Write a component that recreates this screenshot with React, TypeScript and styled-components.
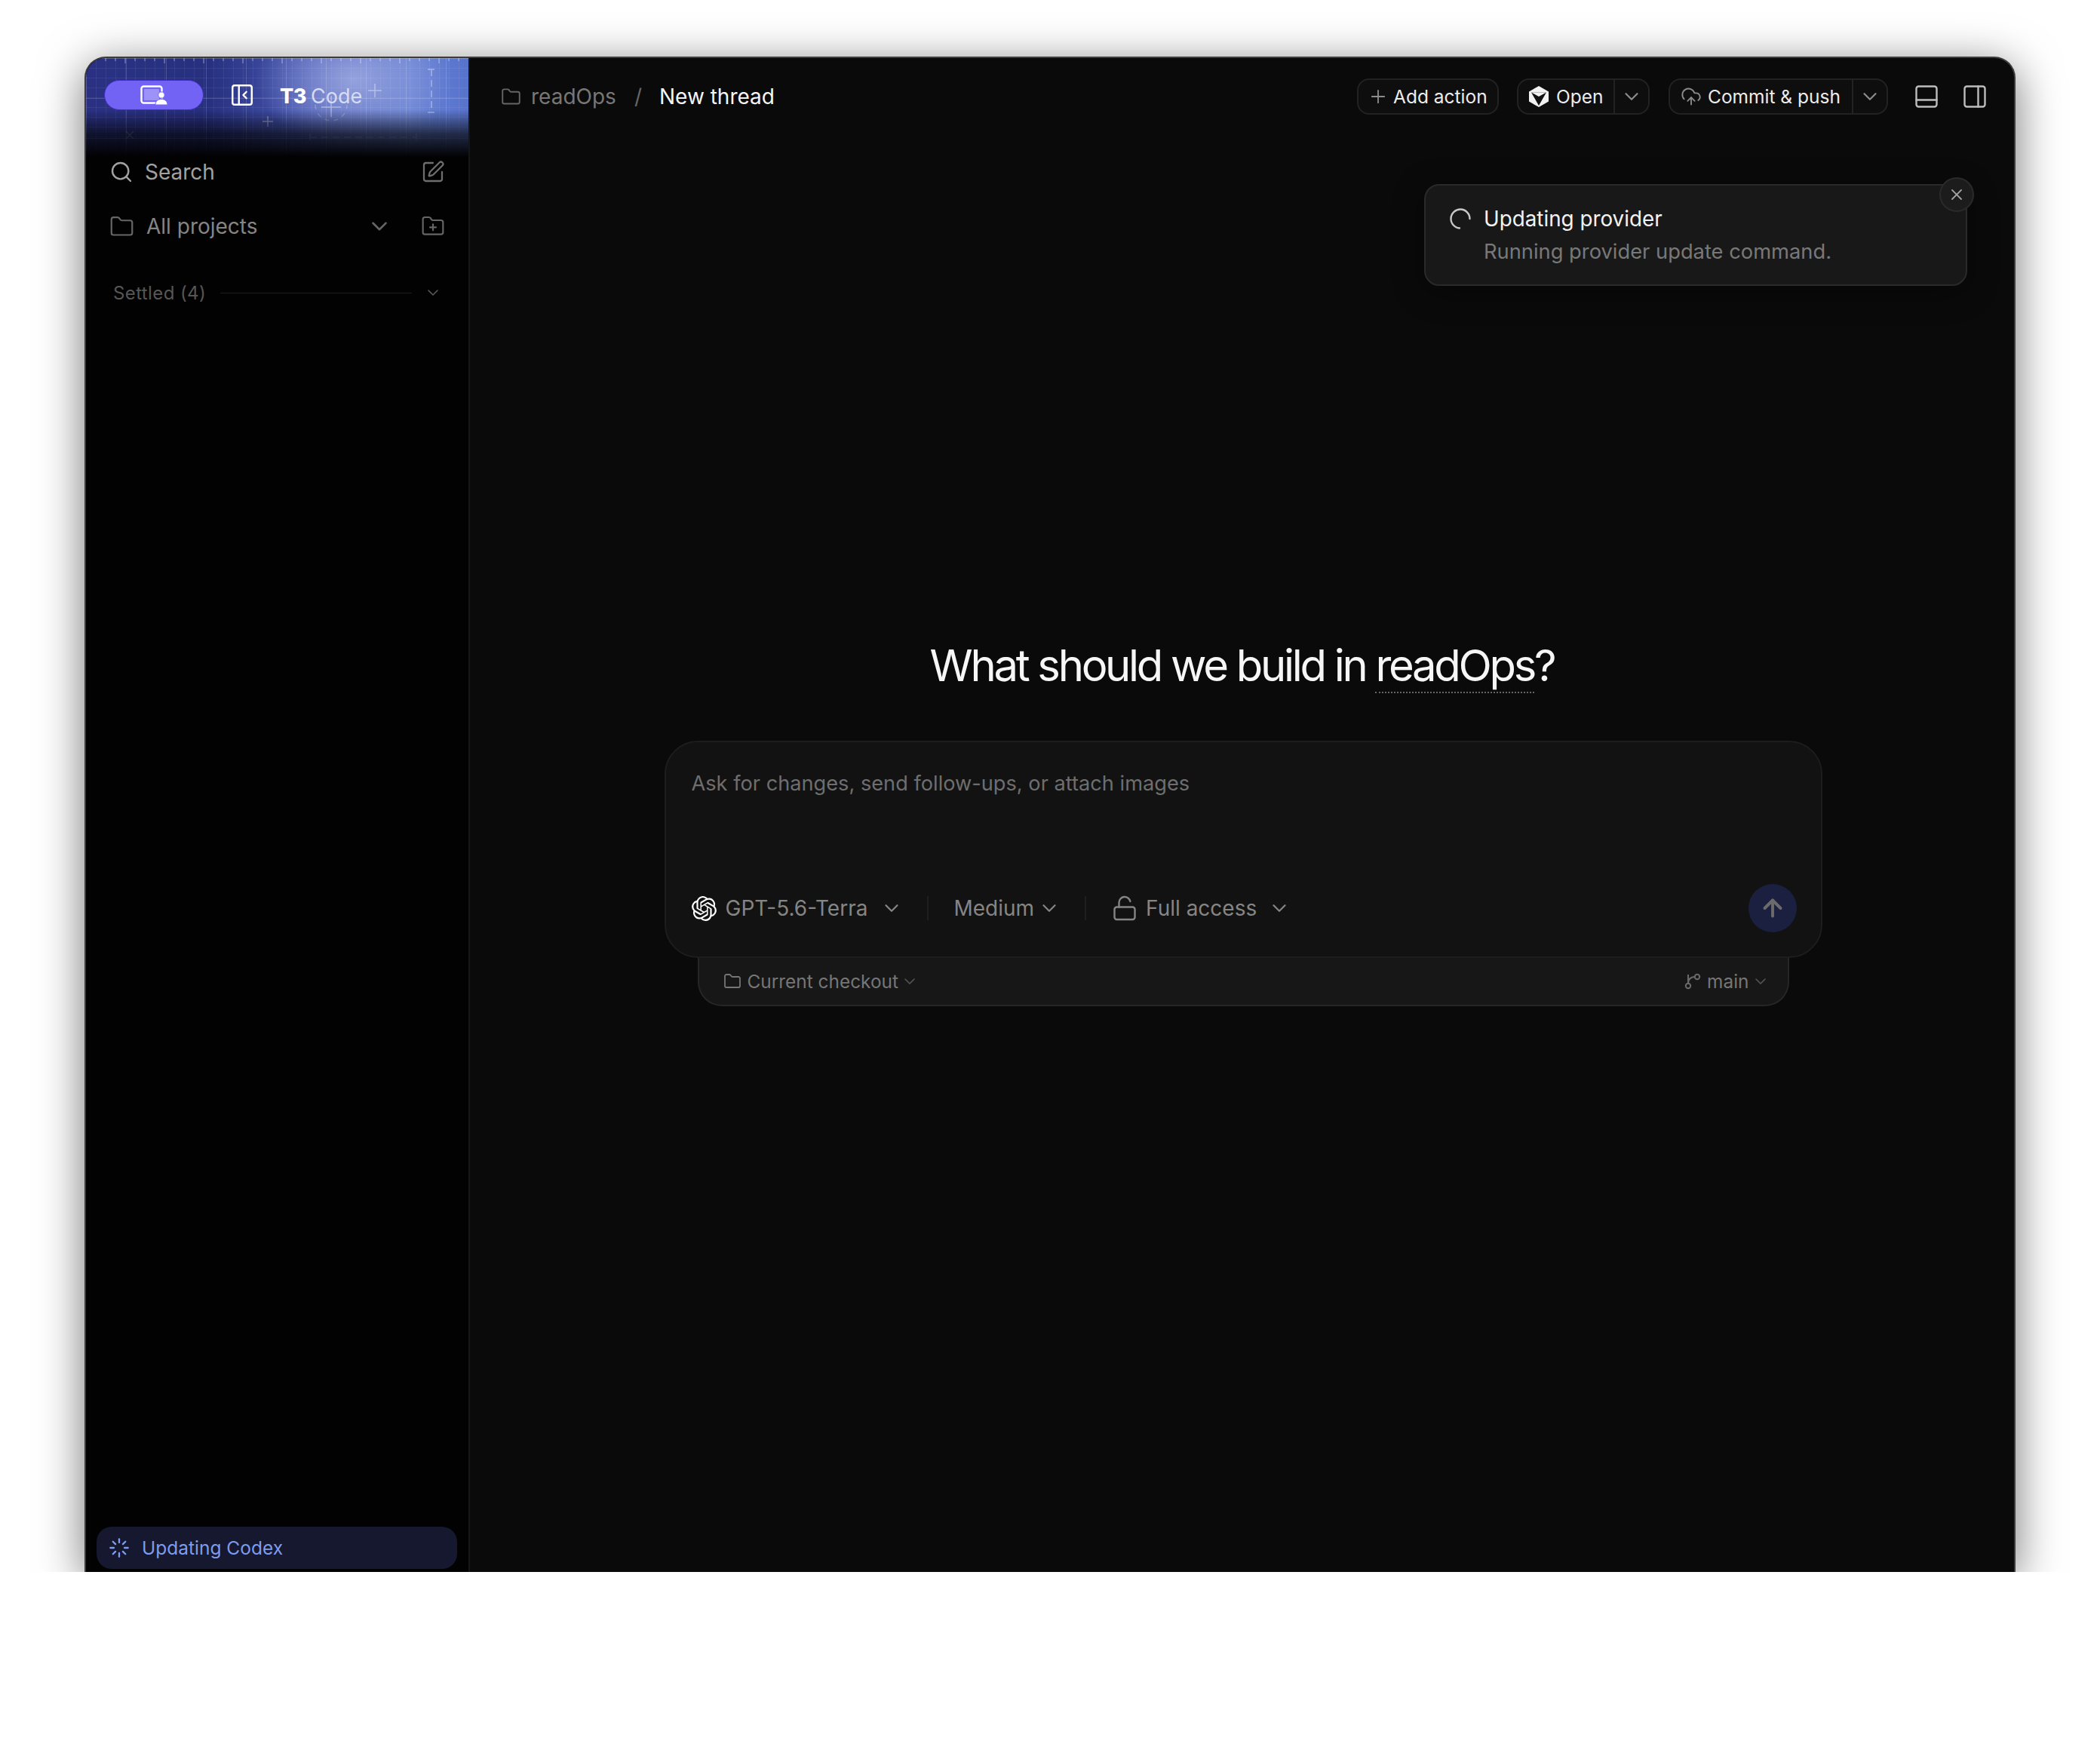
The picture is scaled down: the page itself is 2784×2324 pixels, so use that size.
import React from 'react';
import styled, { createGlobalStyle } from 'styled-components';
import {
  ArrowUp,
  ChevronDown,
  CloudUpload,
  Folder,
  FolderPlus,
  Loader,
  LockOpen,
  PanelBottom,
  PanelLeftClose,
  PanelRight,
  Plus,
  Search,
  SquarePen,
  X,
} from 'lucide-react';
import { SiOpenai } from 'react-icons/si';

const GlobalStyle = createGlobalStyle`
  html, body {
    margin: 0;
    background: #fff;
    font-family: Inter, "Liberation Sans", sans-serif;
  }
  * { box-sizing: border-box; }
`;

const Page = styled.div`
  width: 2784px;
  height: 2324px;
  background: #fff;
`;

const Stage = styled.div`
  height: 2084px;
  padding: 75px 112px 0;
  overflow: hidden;
`;

const AppWindow = styled.div`
  display: flex;
  height: 2009px;
  background: #0a0a0a;
  border: 2px solid #3c3c3c;
  border-bottom: 0;
  border-radius: 28px 28px 0 0;
  box-shadow: 0 12px 60px rgba(0, 0, 0, 0.55);
  overflow: hidden;
`;

const Sidebar = styled.aside`
  position: relative;
  display: flex;
  flex-direction: column;
  flex: 0 0 509px;
  background: #020202;
  border-right: 2px solid #161616;
`;

const HeaderArt = styled.div`
  position: absolute;
  top: 0;
  left: 0;
  right: 0;
  height: 132px;
  background:
    radial-gradient(ellipse 130px 90px at 355px 28px, rgba(160, 172, 226, 0.85), rgba(160, 172, 226, 0) 100%),
    linear-gradient(90deg, #2a3183 0%, #27307f 32%, #4a5bb6 60%, #6580d4 85%, #5873cc 100%);
  mask-image: linear-gradient(180deg, #000 0%, #000 52%, rgba(0, 0, 0, 0.35) 76%, transparent 100%);
`;

const HeaderGrid = styled.div`
  position: absolute;
  inset: 0;
  background-image:
    linear-gradient(90deg, rgba(255, 255, 255, 0.16) 1px, transparent 1px),
    linear-gradient(180deg, rgba(255, 255, 255, 0.16) 1px, transparent 1px),
    linear-gradient(90deg, rgba(255, 255, 255, 0.06) 1px, transparent 1px),
    linear-gradient(180deg, rgba(255, 255, 255, 0.06) 1px, transparent 1px);
  background-size: 53px 53px, 53px 53px, 13px 13px, 13px 13px;
`;

const ArtDrawing = styled.svg`
  position: absolute;
  top: 0;
  left: 0;
`;

const SidebarHeader = styled.div`
  position: relative;
  display: flex;
  align-items: flex-start;
  height: 127px;
  padding: 29px 0 0 24px;
`;

const ModePill = styled.div`
  display: flex;
  align-items: center;
  justify-content: center;
  width: 132px;
  height: 40px;
  background: #7263f5;
  border: 1px solid #3f30c4;
  border-radius: 20px;
`;

const CollapseButton = styled.div`
  display: flex;
  margin: 3px 0 0 34px;
  color: #fff;
`;

const Brand = styled.div`
  margin: 2px 0 0 33px;
  font-size: 27px;
  line-height: 40px;
  color: #d5dcf5;
  white-space: nowrap;
`;

const BrandMark = styled.span`
  margin-right: 6px;
  font-weight: 800;
  letter-spacing: -0.5px;
  color: #fff;
`;

const NavRow = styled.div<{ $top: number; $color: string }>`
  display: flex;
  align-items: center;
  height: 48px;
  margin-top: ${(p) => p.$top}px;
  padding: 0 31px 0 31px;
  font-size: 28px;
  color: ${(p) => p.$color};
`;

const NavLabel = styled.span<{ $gap: number }>`
  flex: 1;
  margin-left: ${(p) => p.$gap}px;
`;

const ProjectChevron = styled(ChevronDown)`
  margin-right: 38px;
`;

const SectionRow = styled.div`
  display: flex;
  align-items: center;
  height: 48px;
  margin-top: 40px;
  padding: 0 35px 0 36px;
  font-size: 24px;
  letter-spacing: 0.4px;
  color: #565656;
`;

const SectionRule = styled.div`
  flex: 1;
  height: 1px;
  margin: 0 16px 0 19px;
  background: #1c1c1c;
`;

const UpdateBadge = styled.div`
  display: flex;
  align-items: center;
  gap: 16px;
  height: 56px;
  margin: auto 15px 4px 14px;
  padding: 0 16px 0 16px;
  background: #15182e;
  border-radius: 20px;
  font-size: 24.5px;
  color: #7d9cf0;
`;

const Main = styled.main`
  position: relative;
  display: flex;
  flex-direction: column;
  align-items: center;
  flex: 1;
  min-width: 0;
`;

const TopBar = styled.header`
  display: flex;
  align-items: center;
  justify-content: space-between;
  align-self: stretch;
  height: 102px;
  padding: 0 34px 0 41px;
`;

const Breadcrumb = styled.div`
  display: flex;
  align-items: center;
  font-size: 28px;
  color: #777;
`;

const CrumbLabel = styled.span`
  margin-left: 13px;
`;

const CrumbSlash = styled.span`
  margin: 0 23px 0 24px;
  color: #666;
`;

const CrumbCurrent = styled.span`
  color: #f5f5f5;
`;

const Actions = styled.div`
  display: flex;
  align-items: center;
`;

const ActionGroup = styled.div<{ $width: number; $gap: number }>`
  display: flex;
  align-items: center;
  width: ${(p) => p.$width}px;
  height: 48px;
  margin-right: ${(p) => p.$gap}px;
  background: #0e0e0e;
  border: 2px solid #222;
  border-radius: 16px;
  font-size: 24.5px;
  color: #ececec;
`;

const ActionMain = styled.div<{ $gap: number; $left: number }>`
  display: flex;
  flex: 1;
  align-items: center;
  gap: ${(p) => p.$gap}px;
  height: 100%;
  padding-left: ${(p) => p.$left}px;
  white-space: nowrap;
`;

const ActionCaret = styled.div`
  display: flex;
  align-items: center;
  justify-content: center;
  flex: 0 0 46px;
  height: 100%;
  border-left: 2px solid #222;
  color: #8a8a8a;
`;

const PlusIcon = styled(Plus)`
  color: #8c8c8c;
`;

const CloudIcon = styled(CloudUpload)`
  color: #8c8c8c;
`;

const LayoutToggles = styled.div`
  display: flex;
  gap: 28px;
  color: #bdbdbd;
`;

const Toast = styled.div`
  position: absolute;
  top: 167px;
  right: 62px;
  display: flex;
  gap: 17px;
  width: 720px;
  height: 135px;
  padding: 24px 32px;
  background: #181818;
  border: 2px solid #2a2a2a;
  border-radius: 20px;
  box-shadow: 0 8px 40px rgba(0, 0, 0, 0.4);
`;

const ToastSpinner = styled.svg`
  flex: none;
  margin-top: 6px;
`;

const ToastTitle = styled.div`
  font-size: 27.8px;
  line-height: 40px;
  color: #f2f2f2;
`;

const ToastBody = styled.div`
  margin-top: 4px;
  font-size: 27.3px;
  line-height: 40px;
  color: #787878;
`;

const ToastClose = styled.div`
  position: absolute;
  top: -11px;
  right: -11px;
  display: flex;
  align-items: center;
  justify-content: center;
  width: 46px;
  height: 46px;
  background: #1c1c1c;
  border: 2px solid #2a2a2a;
  border-radius: 50%;
  color: #a2a2a2;
`;

const Heading = styled.h1`
  margin: 667px 0 0;
  font-size: 58px;
  font-weight: 400;
  line-height: 72px;
  letter-spacing: -3.3px;
  color: #f6f6f6;
`;

const RepoName = styled.span`
  border-bottom: 2px dotted #666;
`;

const Composer = styled.div`
  display: flex;
  flex-direction: column;
  justify-content: space-between;
  width: 1535px;
  height: 288px;
  margin: 64px 0 0 3px;
  padding: 35px 32px 32px 34px;
  background: #121212;
  border: 2px solid #1d1d1d;
  border-radius: 44px;
  position: relative;
  z-index: 1;
`;

const Placeholder = styled.div`
  font-size: 27.2px;
  line-height: 40px;
  color: #6e6e6e;
`;

const ComposerBar = styled.div`
  display: flex;
  align-items: center;
  height: 64px;
  font-size: 28px;
  color: #858585;
`;

const Picker = styled.div<{ $gap: number }>`
  display: flex;
  align-items: center;
  gap: ${(p) => p.$gap}px;
`;

const PickerChevron = styled(ChevronDown)`
  margin-left: 5px;
`;

const PickerDivider = styled.div`
  width: 2px;
  height: 32px;
  margin: 0 33px 0 32px;
  background: #1f1f1f;
`;

const Spacer = styled.div`
  flex: 1;
`;

const SendButton = styled.div`
  display: flex;
  align-items: center;
  justify-content: center;
  width: 64px;
  height: 64px;
  background: #1c2040;
  border-radius: 50%;
  color: #6b6b6b;
`;

const ComposerFooter = styled.div`
  display: flex;
  align-items: center;
  justify-content: space-between;
  width: 1447px;
  height: 65px;
  margin: -1px 0 0 3px;
  padding: 0 24px 0 32px;
  background: #171717;
  border: 2px solid #262626;
  border-top: 0;
  border-radius: 0 0 32px 32px;
  font-size: 24.4px;
  color: #767676;
`;

const FooterItem = styled.div`
  display: flex;
  align-items: center;
  gap: 8px;
`;

const FooterChevron = styled(ChevronDown)`
  margin-left: -5px;
  color: #565656;
`;

function HeaderDrawing() {
  const ticks = Array.from({ length: 39 }, (_, i) => `M${i * 13} 0v${i % 4 === 0 ? 7 : 4}`).join('');
  return (
    <ArtDrawing width="507" height="132" fill="none" stroke="rgba(255,255,255,0.4)" strokeWidth="1.5">
      <path d={ticks} opacity="0.8" />
      <path d="M383 34v18M374 43h18" />
      <path d="M241 77v14M234 84h14" />
      <path d="M53 97l10 10M63 97l-10 10" opacity="0.6" />
      <path d="M304 62a21 21 0 0 0 42 0" strokeDasharray="6 6" opacity="0.6" />
      <path d="M325 50v28M312 65h26" />
      <path d="M297 100v10M297 105h141M438 100v10" strokeDasharray="9 6" opacity="0.6" />
      <path d="M453 15h10M458 15v57M453 72h10" strokeDasharray="9 5" />
    </ArtDrawing>
  );
}

function ModeIcon() {
  return (
    <svg width="36" height="26" viewBox="0 0 36 26" fill="none">
      <rect x="1.5" y="1.5" width="27" height="22" rx="3" stroke="#fff" strokeWidth="2.4" />
      <rect x="5" y="5" width="20" height="15" fill="#fff" opacity="0.3" />
      <circle cx="28" cy="13" r="4.2" fill="#fff" stroke="#7263f5" strokeWidth="1" />
      <path d="M20 26c0-5 3.500-7.600 8-7.600s8 2.600 8 7.600z" fill="#fff" stroke="#7263f5" strokeWidth="1" />
    </svg>
  );
}

function CursorIcon() {
  return (
    <svg width="26" height="28" viewBox="0 0 26 28">
      <path d="M13 0l13 7.500v13L13 28 0 20.500v-13z" fill="#f2f2f2" />
      <path d="M3 8.500h20L13 26z" fill="#111" />
      <path d="M13 26V14L3 8.500h20L13 14z" fill="#f2f2f2" />
    </svg>
  );
}

function BranchIcon() {
  return (
    <svg width="22" height="22" viewBox="0 0 22 22" fill="none" stroke="#6a6a6a" strokeWidth="2">
      <circle cx="5" cy="17" r="3.200" />
      <circle cx="17" cy="5" r="3.200" />
      <path d="M5 14V2M5 13c0-5 4-8 9-8" />
    </svg>
  );
}

export default function App() {
  return (
    <Page>
      <GlobalStyle />
      <Stage>
        <AppWindow>
          <Sidebar>
            <HeaderArt>
              <HeaderGrid />
              <HeaderDrawing />
            </HeaderArt>
            <SidebarHeader>
              <ModePill>
                <ModeIcon />
              </ModePill>
              <CollapseButton>
                <PanelLeftClose size={34} strokeWidth={1.7} />
              </CollapseButton>
              <Brand>
                <BrandMark>T3</BrandMark>Code
              </Brand>
            </SidebarHeader>
            <NavRow $top={0} $color="#a2a2a2">
              <Search size={32} strokeWidth={1.8} />
              <NavLabel $gap={15}>Search</NavLabel>
              <SquarePen size={32} strokeWidth={1.7} color="#6e6e6e" />
            </NavRow>
            <NavRow $top={24} $color="#858585">
              <Folder size={33} strokeWidth={1.6} color="#666" />
              <NavLabel $gap={16}>All projects</NavLabel>
              <ProjectChevron size={34} strokeWidth={1.8} color="#666" />
              <FolderPlus size={32} strokeWidth={1.6} color="#666" />
            </NavRow>
            <SectionRow>
              <span>Settled (4)</span>
              <SectionRule />
              <ChevronDown size={24} strokeWidth={1.6} color="#5a5a5a" />
            </SectionRow>
            <UpdateBadge>
              <Loader size={28} strokeWidth={2} />
              Updating Codex
            </UpdateBadge>
          </Sidebar>
          <Main>
            <TopBar>
              <Breadcrumb>
                <Folder size={27} strokeWidth={1.7} color="#666" />
                <CrumbLabel>readOps</CrumbLabel>
                <CrumbSlash>/</CrumbSlash>
                <CrumbCurrent>New thread</CrumbCurrent>
              </Breadcrumb>
              <Actions>
                <ActionGroup $width={188} $gap={24}>
                  <ActionMain $gap={6} $left={12}>
                    <PlusIcon size={28} strokeWidth={1.6} />
                    Add action
                  </ActionMain>
                </ActionGroup>
                <ActionGroup $width={176} $gap={25}>
                  <ActionMain $gap={10} $left={14}>
                    <CursorIcon />
                    Open
                  </ActionMain>
                  <ActionCaret>
                    <ChevronDown size={30} strokeWidth={1.8} />
                  </ActionCaret>
                </ActionGroup>
                <ActionGroup $width={291} $gap={33}>
                  <ActionMain $gap={8} $left={14}>
                    <CloudIcon size={28} strokeWidth={1.6} />
                    Commit &amp; push
                  </ActionMain>
                  <ActionCaret>
                    <ChevronDown size={30} strokeWidth={1.8} />
                  </ActionCaret>
                </ActionGroup>
                <LayoutToggles>
                  <PanelBottom size={36} strokeWidth={1.6} />
                  <PanelRight size={36} strokeWidth={1.6} />
                </LayoutToggles>
              </Actions>
            </TopBar>
            <Toast>
              <ToastSpinner width="28" height="28" viewBox="0 0 28 28" fill="none">
                <path
                  d="M13 26.500A12.500 12.500 0 1 1 26.500 14"
                  stroke="#c8c8c8"
                  strokeWidth="2.4"
                  strokeLinecap="round"
                />
              </ToastSpinner>
              <div>
                <ToastTitle>Updating provider</ToastTitle>
                <ToastBody>Running provider update command.</ToastBody>
              </div>
              <ToastClose>
                <X size={24} strokeWidth={1.8} />
              </ToastClose>
            </Toast>
            <Heading>
              What should we build in <RepoName>readOps</RepoName>?
            </Heading>
            <Composer>
              <Placeholder>Ask for changes, send follow-ups, or attach images</Placeholder>
              <ComposerBar>
                <Picker $gap={12}>
                  <SiOpenai size={33} color="#fff" />
                  GPT-5.6-Terra
                  <PickerChevron size={30} strokeWidth={1.8} />
                </Picker>
                <PickerDivider />
                <Picker $gap={0}>
                  Medium
                  <PickerChevron size={30} strokeWidth={1.8} />
                </Picker>
                <PickerDivider />
                <Picker $gap={10}>
                  <LockOpen size={36} strokeWidth={1.6} />
                  Full access
                  <PickerChevron size={30} strokeWidth={1.8} />
                </Picker>
                <Spacer />
                <SendButton>
                  <ArrowUp size={36} strokeWidth={2.6} />
                </SendButton>
              </ComposerBar>
            </Composer>
            <ComposerFooter>
              <FooterItem>
                <Folder size={24} strokeWidth={1.8} />
                Current checkout
                <FooterChevron size={24} strokeWidth={1.6} />
              </FooterItem>
              <FooterItem>
                <BranchIcon />
                main
                <FooterChevron size={24} strokeWidth={1.6} />
              </FooterItem>
            </ComposerFooter>
          </Main>
        </AppWindow>
      </Stage>
    </Page>
  );
}
